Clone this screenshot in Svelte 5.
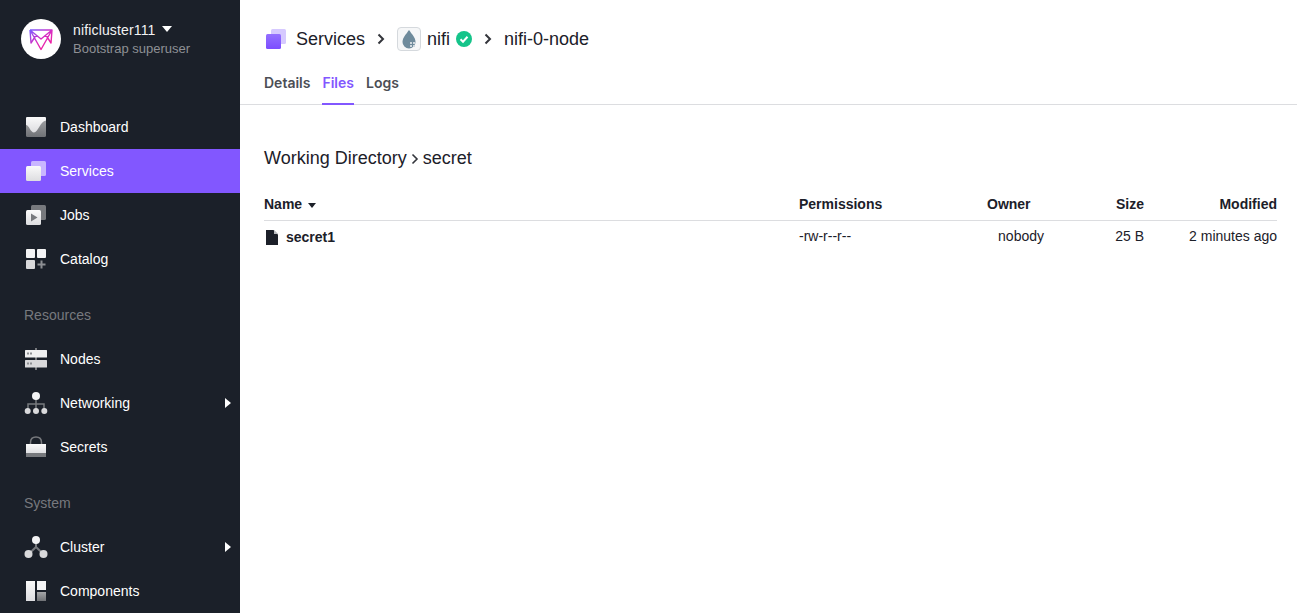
<script>
    // sidebar sections; icon names map to the snippets below
    const mainNav = [
        { label: 'Dashboard', icon: 'dashboard' },
        { label: 'Services', icon: 'services', active: true },
        { label: 'Jobs', icon: 'jobs' },
        { label: 'Catalog', icon: 'catalog' }
    ];
    const resources = [
        { label: 'Nodes', icon: 'nodes' },
        { label: 'Networking', icon: 'networking', more: true },
        { label: 'Secrets', icon: 'secrets' }
    ];
    const system = [
        { label: 'Cluster', icon: 'cluster', more: true },
        { label: 'Components', icon: 'components' }
    ];
    const tabs = ['Details', 'Files', 'Logs'];
</script>

{#snippet navIcon(name)}
    <svg class="nav-icon" width="24" height="24" viewBox="0 0 24 24">
        {#if name === 'dashboard'}
            <rect x="2" y="2" width="20" height="20" rx="1.500" fill="url(#grey)" />
            <path d="M2 10C5 10 6.500 17.500 10 17.500C14 17.500 16 6.500 22 5.500V3.500C22 2.500 21.500 2 20.500 2H3.500C2.500 2 2 2.500 2 3.500Z" fill="url(#white)" />
        {:else if name === 'services'}
            <rect x="7" y="2" width="15" height="15" rx="1.500" fill="#c9b6ff" />
            <rect x="2" y="7" width="15" height="15" rx="1.500" fill="url(#white)" />
        {:else if name === 'jobs'}
            <rect x="7" y="2" width="15" height="15" rx="1.500" fill="#77797d" />
            <rect x="2" y="7" width="15" height="15" rx="1.500" fill="url(#white)" />
            <path d="M7 10.500L13.500 14.500L7 18.500Z" fill="#77797d" />
        {:else if name === 'catalog'}
            <rect x="2" y="2" width="9" height="9" rx="1" fill="#f4f4f5" />
            <rect x="13" y="2" width="9" height="9" rx="1" fill="#f4f4f5" />
            <rect x="2" y="13" width="9" height="9" rx="1" fill="#d9d9db" />
            <path d="M17.500 13.500V21.500M13.500 17.500H21.500" stroke="#8d8f93" stroke-width="2" />
        {:else if name === 'nodes'}
            <path d="M12 1V23" stroke="#77797d" stroke-width="2" />
            <rect x="1" y="3" width="22" height="7.500" rx=".5" fill="#f0f0f1" />
            <rect x="1" y="13" width="22" height="7.500" rx=".5" fill="#d9d9db" />
            <path d="M3 5.500h2v2h-2zM6 5.500h2v2h-2zM3 15.500h2v2h-2zM6 15.500h2v2h-2z" fill="#8d8f93" />
        {:else if name === 'networking'}
            <path d="M12 6V13M4 18V13H20V18M12 13V18" fill="none" stroke="#77797d" stroke-width="1.500" />
            <circle cx="12" cy="5" r="4" fill="#f4f4f5" />
            <circle cx="3.700" cy="20" r="3" fill="#d9d9db" />
            <circle cx="12" cy="20" r="3" fill="#d9d9db" />
            <circle cx="20.300" cy="20" r="3" fill="#d9d9db" />
        {:else if name === 'secrets'}
            <path d="M6.500 10V7.500C6.500 3.500 9 2 12 2C15 2 17.500 3.500 17.500 7.500V10" fill="none" stroke="#77797d" stroke-width="1.500" />
            <rect x="2" y="9" width="20" height="10" fill="url(#white)" />
            <rect x="2" y="18" width="20" height="4" fill="#77797d" />
        {:else if name === 'cluster'}
            <path d="M12 6V12L4.700 19M12 12L19.300 19" fill="none" stroke="#77797d" stroke-width="2" />
            <circle cx="12" cy="5" r="4" fill="#f4f4f5" />
            <circle cx="4.500" cy="19" r="4" fill="#d9d9db" />
            <circle cx="19.500" cy="19" r="4" fill="#d9d9db" />
        {:else if name === 'components'}
            <rect x="2" y="2" width="9" height="20" fill="url(#white)" />
            <rect x="13" y="2" width="9" height="9" fill="#f4f4f5" />
            <rect x="13" y="13" width="9" height="9" fill="url(#grey)" />
        {/if}
    </svg>
{/snippet}

{#snippet navList(items)}
    {#each items as item}
        <div class="nav-item" class:active={item.active}>
            {@render navIcon(item.icon)}
            <span>{item.label}</span>
            {#if item.more}<span class="more"></span>{/if}
        </div>
    {/each}
{/snippet}

<svg class="defs" width="0" height="0" aria-hidden="true">
    <defs>
        <linearGradient id="grey" x1="0" y1="0" x2="0" y2="1">
            <stop offset="0" stop-color="#a5a6a8" />
            <stop offset="1" stop-color="#707276" />
        </linearGradient>
        <linearGradient id="white" x1="0" y1="0" x2="0" y2="1">
            <stop offset="0" stop-color="#fafafa" />
            <stop offset="1" stop-color="#dddde0" />
        </linearGradient>
        <linearGradient id="purple" x1="0" y1="0" x2="0" y2="1">
            <stop offset="0" stop-color="#9470ff" />
            <stop offset="1" stop-color="#7c4dff" />
        </linearGradient>
        <linearGradient id="logo" gradientUnits="userSpaceOnUse" x1="2" y1="3" x2="16" y2="22">
            <stop offset="0" stop-color="#7c5cff" />
            <stop offset="0.6" stop-color="#d92bc0" />
            <stop offset="1" stop-color="#f01fa0" />
        </linearGradient>
    </defs>
</svg>

<div class="page">
    <aside class="sidebar">
        <div class="account">
            <div class="avatar">
                <svg width="26" height="24" viewBox="0 0 26 24">
                    <path d="M2 3H24L23 16L17.500 7.500M2 3L3 16L8.500 7.500M2 3L13 12L24 3M2 3L13 22.500L24 3" fill="none" stroke="url(#logo)" stroke-width="1.400" stroke-linejoin="round" />
                </svg>
            </div>
            <div class="account-text">
                <div class="account-name">nificluster111 <span class="caret"></span></div>
                <div class="account-role">Bootstrap superuser</div>
            </div>
        </div>
        <nav>
            {@render navList(mainNav)}
            <div class="section-title">Resources</div>
            {@render navList(resources)}
            <div class="section-title">System</div>
            {@render navList(system)}
        </nav>
    </aside>

    <main class="main">
        <header class="header">
            <div class="crumbs">
                <svg width="24" height="24" viewBox="0 0 24 24">
                    <rect x="7" y="2" width="15" height="15" rx="1.500" fill="#d6c9ff" />
                    <rect x="2" y="7" width="15" height="15" rx="1.500" fill="url(#purple)" />
                </svg>
                <span class="crumb first">Services</span>
                <svg class="chev" width="10" height="12" viewBox="0 0 10 12"><path d="M2.500 1.500L7 6L2.500 10.500" fill="none" stroke="#33353b" stroke-width="2" /></svg>
                <span class="service-logo">
                    <svg width="16" height="20" viewBox="0 0 16 20">
                        <path d="M8 1C11 5.500 14.500 8.500 14.500 13A6.500 6.500 0 0 1 1.500 13C1.500 8.500 5 5.500 8 1Z" fill="#6f8b9c" />
                        <path d="M9 13h2v2h-2zM12 13h2v2h-2zM9 16h2v2h-2zM12 16h2v2h-2z" fill="#cfd8de" />
                    </svg>
                </span>
                <span class="crumb">nifi</span>
                <svg class="check" width="16" height="16" viewBox="0 0 16 16">
                    <circle cx="8" cy="8" r="8" fill="#15c48a" />
                    <path d="M4.500 8.300L7 10.700L11.500 5.800" fill="none" stroke="#fff" stroke-width="2" />
                </svg>
                <svg class="chev" width="10" height="12" viewBox="0 0 10 12"><path d="M2.500 1.500L7 6L2.500 10.500" fill="none" stroke="#33353b" stroke-width="2" /></svg>
                <span class="crumb">nifi-0-node</span>
            </div>
            <div class="tabs">
                {#each tabs as tab}
                    <div class="tab" class:current={tab === 'Files'}>{tab}</div>
                {/each}
            </div>
        </header>

        <section class="content">
            <h2 class="path">Working Directory<svg width="8" height="12" viewBox="0 0 8 12"><path d="M1.500 1.500L6 6L1.500 10.500" fill="none" stroke="#33353b" stroke-width="1.600" /></svg>secret</h2>

            <div class="row head">
                <div class="name">Name <span class="sort"></span></div>
                <div>Permissions</div>
                <div class="owner-head">Owner</div>
                <div class="right">Size</div>
                <div class="right">Modified</div>
            </div>
            <div class="row body">
                <div class="name file">
                    <svg width="12" height="15" viewBox="0 0 12 15">
                        <path d="M0 0H7.500L12 4.500V15H0Z" fill="#1c2029" />
                        <path d="M8 0L12 4H8Z" fill="#b9bbbf" />
                    </svg>
                    secret1
                </div>
                <div>-rw-r--r--</div>
                <div class="right owner">nobody</div>
                <div class="right">25 B</div>
                <div class="right">2 minutes ago</div>
            </div>
        </section>
    </main>
</div>

<style>
    :global(body) {
        margin: 0;
        overflow: hidden;
        background: #fff;
        font-family: "Liberation Sans", Arial, sans-serif;
    }

    .defs {
        position: absolute;
    }

    .page {
        display: flex;
        height: 613px;
        overflow: hidden;
    }

    .sidebar {
        width: 240px;
        flex: none;
        background: #1b2029;
        color: #fff;
        font-size: 14px;
    }

    .account {
        display: flex;
        align-items: center;
        gap: 12px;
        padding: 19px 0 0 21px;
        height: 40px;
    }

    .avatar {
        width: 40px;
        height: 40px;
        border-radius: 50%;
        background: #fff;
        display: flex;
        align-items: center;
        justify-content: center;
    }

    .account-name {
        font-size: 14px;
        line-height: 20px;
        letter-spacing: 0.15px;
        color: #f2f2f3;
    }

    .account-role {
        font-size: 13px;
        line-height: 18px;
        color: #8e9095;
    }

    .caret {
        display: inline-block;
        margin-left: 2px;
        vertical-align: 3px;
        border-left: 5px solid transparent;
        border-right: 5px solid transparent;
        border-top: 6px solid #fff;
    }

    nav {
        margin-top: 46px;
    }

    .nav-item {
        position: relative;
        display: flex;
        align-items: center;
        gap: 12px;
        height: 44px;
        padding-left: 24px;
    }

    .nav-item.active {
        background: #8257ff;
    }

    .nav-icon {
        flex: none;
    }

    .more {
        position: absolute;
        right: 9px;
        top: 17px;
        border-top: 5px solid transparent;
        border-bottom: 5px solid transparent;
        border-left: 6px solid #fff;
    }

    .section-title {
        height: 44px;
        margin-top: 12px;
        padding-left: 24px;
        line-height: 44px;
        color: #77797e;
    }

    .main {
        flex: 1;
        min-width: 0;
        color: #1c2029;
    }

    .header {
        border-bottom: 1px solid #dcdde0;
        height: 104px;
        padding-left: 24px;
    }

    .crumbs {
        display: flex;
        align-items: center;
        height: 24px;
        padding-top: 27px;
    }

    .crumb {
        font-size: 18px;
        color: #1c2029;
    }

    .crumb.first {
        margin-left: 8px;
    }

    .chev {
        margin: 0 11px;
    }

    .service-logo {
        width: 22px;
        height: 22px;
        border: 1px solid #d5d9dd;
        border-radius: 4px;
        background: #f6f7f8;
        display: flex;
        align-items: center;
        justify-content: center;
        margin-right: 6px;
    }

    .check {
        margin-left: 6px;
    }

    .tabs {
        display: flex;
        gap: 12px;
        margin-top: 11px;
    }

    .tab {
        font-family: Inter, sans-serif;
        font-size: 14px;
        font-weight: 600;
        height: 42px;
        line-height: 42px;
        box-sizing: border-box;
        color: #4c4e55;
    }

    .tab.current {
        color: #8257ff;
        border-bottom: 2px solid #8257ff;
        height: 43px;
    }

    .content {
        padding: 41px 20px 0 24px;
    }

    .path {
        display: flex;
        align-items: center;
        margin: 0 0 18px;
        font-size: 18px;
        font-weight: 400;
        line-height: 24px;
    }

    .path svg {
        margin: 1px 4px 0;
    }

    .row {
        display: grid;
        grid-template-columns: 535px 188px 57px 100px 133px;
        font-size: 14px;
        height: 32px;
        align-items: center;
    }

    .row.head {
        font-weight: 700;
        border-bottom: 1px solid #dcdde0;
    }

    .row.body {
        height: 30px;
    }

    .right {
        text-align: right;
    }

    .owner-head {
        text-align: left;
    }

    .owner {
        white-space: nowrap;
    }

    .name {
        display: flex;
        align-items: center;
        gap: 5px;
    }

    .file {
        font-weight: 700;
        gap: 8px;
        padding: 2px 0 0 2px;
    }

    .sort {
        display: inline-block;
        margin: 2px 0 0 1px;
        border-left: 4px solid transparent;
        border-right: 4px solid transparent;
        border-top: 5px solid #1c2029;
    }
</style>
